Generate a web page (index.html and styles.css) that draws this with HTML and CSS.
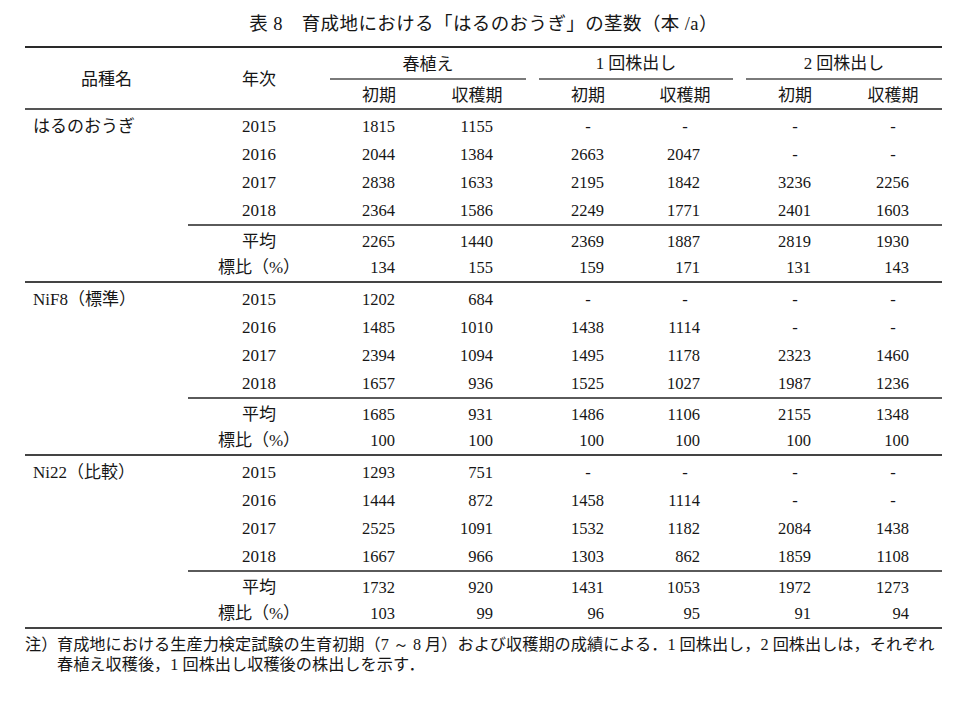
FILE: index.html
```html
<!DOCTYPE html>
<html lang="ja">
<head>
<meta charset="utf-8">
<title>表8</title>
<link rel="stylesheet" href="styles.css">
</head>
<body>
<div class="page">
  <h1 class="title">表<span class="num">&nbsp;8</span>　育成地における「はるのおうぎ」の茎数（本<span class="num"> /a</span>）</h1>
  <table class="tbl">
    <colgroup>
      <col class="c-name"><col class="c-year"><col class="c-v"><col class="c-v"><col class="c-gap"><col class="c-v"><col class="c-v6"><col class="c-gap"><col class="c-v"><col class="c-v">
    </colgroup>
    <thead>
      <tr class="h1">
        <th rowspan="2" class="hspan">品種名</th>
        <th rowspan="2" class="hspan">年次</th>
        <th colspan="2" class="grp">春植え</th>
        <th class="gap"></th>
        <th colspan="2" class="grp"><span class="num">1</span> 回株出し</th>
        <th class="gap"></th>
        <th colspan="2" class="grp"><span class="num">2</span> 回株出し</th>
      </tr>
      <tr class="h2">
        <th>初期</th><th>収穫期</th><th class="gap"></th><th>初期</th><th>収穫期</th><th class="gap"></th><th>初期</th><th>収穫期</th>
      </tr>
    </thead>
    <tbody>
      <tr class="first"><td class="name">はるのおうぎ</td><td class="yr">2015</td><td>1815</td><td>1155</td><td class="gap"></td><td class="dash">-</td><td class="dash">-</td><td class="gap"></td><td class="dash">-</td><td class="dash">-</td></tr>
      <tr class="mid"><td></td><td class="yr">2016</td><td>2044</td><td>1384</td><td class="gap"></td><td>2663</td><td>2047</td><td class="gap"></td><td class="dash">-</td><td class="dash">-</td></tr>
      <tr class="mid"><td></td><td class="yr">2017</td><td>2838</td><td>1633</td><td class="gap"></td><td>2195</td><td>1842</td><td class="gap"></td><td>3236</td><td>2256</td></tr>
      <tr class="pre"><td></td><td class="yr">2018</td><td>2364</td><td>1586</td><td class="gap"></td><td>2249</td><td>1771</td><td class="gap"></td><td>2401</td><td>1603</td></tr>
      <tr class="avg"><td></td><td class="yr">平均</td><td>2265</td><td>1440</td><td class="gap"></td><td>2369</td><td>1887</td><td class="gap"></td><td>2819</td><td>1930</td></tr>
      <tr class="last"><td></td><td class="yr">標比（%）</td><td>134</td><td>155</td><td class="gap"></td><td>159</td><td>171</td><td class="gap"></td><td>131</td><td>143</td></tr>

      <tr class="first"><td class="name"><span class="num">NiF8</span>（標準）</td><td class="yr">2015</td><td>1202</td><td>684</td><td class="gap"></td><td class="dash">-</td><td class="dash">-</td><td class="gap"></td><td class="dash">-</td><td class="dash">-</td></tr>
      <tr class="mid"><td></td><td class="yr">2016</td><td>1485</td><td>1010</td><td class="gap"></td><td>1438</td><td>1114</td><td class="gap"></td><td class="dash">-</td><td class="dash">-</td></tr>
      <tr class="mid"><td></td><td class="yr">2017</td><td>2394</td><td>1094</td><td class="gap"></td><td>1495</td><td>1178</td><td class="gap"></td><td>2323</td><td>1460</td></tr>
      <tr class="pre"><td></td><td class="yr">2018</td><td>1657</td><td>936</td><td class="gap"></td><td>1525</td><td>1027</td><td class="gap"></td><td>1987</td><td>1236</td></tr>
      <tr class="avg"><td></td><td class="yr">平均</td><td>1685</td><td>931</td><td class="gap"></td><td>1486</td><td>1106</td><td class="gap"></td><td>2155</td><td>1348</td></tr>
      <tr class="last"><td></td><td class="yr">標比（%）</td><td>100</td><td>100</td><td class="gap"></td><td>100</td><td>100</td><td class="gap"></td><td>100</td><td>100</td></tr>

      <tr class="first"><td class="name"><span class="num">Ni22</span>（比較）</td><td class="yr">2015</td><td>1293</td><td>751</td><td class="gap"></td><td class="dash">-</td><td class="dash">-</td><td class="gap"></td><td class="dash">-</td><td class="dash">-</td></tr>
      <tr class="mid"><td></td><td class="yr">2016</td><td>1444</td><td>872</td><td class="gap"></td><td>1458</td><td>1114</td><td class="gap"></td><td class="dash">-</td><td class="dash">-</td></tr>
      <tr class="mid"><td></td><td class="yr">2017</td><td>2525</td><td>1091</td><td class="gap"></td><td>1532</td><td>1182</td><td class="gap"></td><td>2084</td><td>1438</td></tr>
      <tr class="pre"><td></td><td class="yr">2018</td><td>1667</td><td>966</td><td class="gap"></td><td>1303</td><td>862</td><td class="gap"></td><td>1859</td><td>1108</td></tr>
      <tr class="avg"><td></td><td class="yr">平均</td><td>1732</td><td>920</td><td class="gap"></td><td>1431</td><td>1053</td><td class="gap"></td><td>1972</td><td>1273</td></tr>
      <tr class="last"><td></td><td class="yr">標比（%）</td><td>103</td><td>99</td><td class="gap"></td><td>96</td><td>95</td><td class="gap"></td><td>91</td><td>94</td></tr>
    </tbody>
  </table>
  <p class="note"><span class="mark">注）</span>育成地における生産力検定試験の生育初期（<span class="num">7 ～ 8 </span>月）および収穫期の成績による．<span class="num">1 </span>回株出し，<span class="num">2 </span>回株出しは，それぞれ<br>春植え収穫後，<span class="num">1 </span>回株出し収穫後の株出しを示す．</p>
</div>
</body>
</html>
```

FILE: styles.css
```css
html, body {
  margin: 0;
  padding: 0;
  background: #ffffff;
}

body {
  color: #161616;
  font-family: "Liberation Serif", "Noto Sans CJK JP", serif;
  font-size: 17px;
}

.page {
  width: 917px;
  padding: 10px 0 0 25px;
}

.num {
  font-family: "Liberation Serif", serif;
}

.title {
  margin: 0 0 10px 0;
  font-size: 18.5px;
  letter-spacing: 0.4px;
  font-weight: 400;
  line-height: 24px;
  text-align: center;
  font-family: "Noto Sans CJK JP", sans-serif;
}

.tbl {
  width: 917px;
  border-collapse: separate;
  border-spacing: 0;
  table-layout: fixed;
  border-top: 2px solid #2a2a2a;
}

.c-name { width: 163px; }
.c-year { width: 142px; }
.c-v { width: 98px; }
.c-v6 { width: 96px; }
.c-gap { width: 13px; }

.tbl th {
  font-family: "Noto Sans CJK JP", sans-serif;
  font-weight: 400;
  font-size: 17px;
  line-height: 20px;
  text-align: center;
  vertical-align: middle;
  padding: 0;
}

.tbl tr.h1 { height: 32px; }
.tbl tr.h2 { height: 30px; }

.tbl .h1 th.grp {
  border-bottom: 2px solid #7a7a7a;
}

.tbl .h2 th,
.tbl th.hspan {
  border-bottom: 2px solid #555;
}

.tbl td {
  padding: 0 33px 0 0;
  line-height: 20px;
  vertical-align: middle;
  text-align: right;
  font-size: 16.5px;
  white-space: nowrap;
}

.tbl td.gap {
  padding: 0;
}

.tbl td.name {
  text-align: left;
  padding-left: 8px;
  padding-right: 0;
  font-size: 17px;
}

.tbl td.yr {
  text-align: center;
  padding-right: 0;
  font-size: 17px;
}

.tbl td.dash {
  text-align: center;
  padding-right: 0;
}

.tbl tr.first { height: 31px; }
.tbl tr.mid { height: 28px; }
.tbl tr.pre { height: 29px; }
.tbl tr.avg { height: 29px; }
.tbl tr.last { height: 28px; }

.tbl tr.first td {
  padding-top: 3px;
}

.tbl tr.pre td:not(:first-child) {
  border-bottom: 2px solid #5a5a5a;
}

.tbl tr.avg td {
  padding-top: 2px;
}

.tbl tr.last td {
  border-bottom: 2px solid #444;
}

.note {
  margin: 4px 0 0 0;
  padding-left: 32px;
  text-indent: -32px;
  font-size: 16.2px;
  line-height: 20px;
  white-space: nowrap;
}

.note .mark {
  display: inline-block;
  width: 32px;
  text-indent: 0;
  font-family: "Noto Sans CJK JP", sans-serif;
}
```
